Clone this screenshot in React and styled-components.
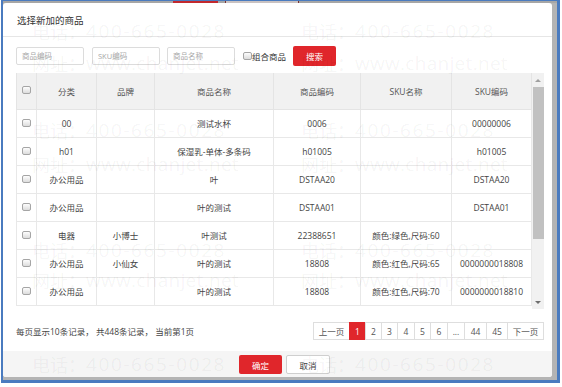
import React from 'react';
import styled, { createGlobalStyle } from 'styled-components';

const Global = createGlobalStyle`
  html, body { margin: 0; padding: 0; background: #fff; }
  body { font-family: "Open Sans", "Noto Sans CJK SC", sans-serif; }
  * { box-sizing: border-box; }
`;

const Page = styled.div`
  position: relative;
  width: 562px;
  height: 387px;
  overflow: hidden;
  background: #fff;
  padding-left: 1px;
`;

const Window = styled.div`
  width: 559px;
  height: 383px;
  border-style: solid;
  border-color: #4a7bbf;
  border-width: 1px 3px 3px 2px;
  background: #b4b4b4;
  display: flex;
  flex-direction: column;
`;

const TopStrip = styled.div`
  height: 2px;
  flex-shrink: 0;
  display: flex;
  padding-left: 170px;
  background: #a6a6a6;
`;

const StripTab = styled.div`
  width: ${p => p.w}px;
  margin-right: ${p => p.gap || 0}px;
  background: ${p => p.bg};
  border-left: ${p => (p.edge ? `1px solid ${p.edge}` : 'none')};
  border-right: ${p => (p.edge ? `1px solid ${p.edge}` : 'none')};
`;

const Modal = styled.div`
  width: 549px;
  height: 374px;
  background: #fff;
  border-radius: 3px;
  display: flex;
  flex-direction: column;
  flex-shrink: 0;
  overflow: hidden;
`;

const Title = styled.div`
  height: 34px;
  flex-shrink: 0;
  display: flex;
  align-items: center;
  padding-left: 14px;
  font-size: 9.5px;
  color: #333;
  border-bottom: 1px solid #e6e6e6;
`;

const Body = styled.div`
  padding: 9px 8px 0 13px;
  display: flex;
  flex-direction: column;
`;

const SearchRow = styled.div`
  height: 20px;
  display: flex;
  align-items: center;
`;

const Input = styled.input`
  width: 68px;
  height: 18px;
  margin-right: ${p => p.gap}px;
  border: 1px solid #dcdcdc;
  border-radius: 2px;
  padding: 0 0 0 5px;
  font-family: "Open Sans", "Noto Sans CJK SC", sans-serif;
  font-size: 7.5px;
  color: #333;
  outline: none;
  &::placeholder { color: #a8a8a8; }
`;

const Check = styled.span`
  display: inline-block;
  width: 9px;
  height: 8px;
  border: 1px solid #a5a5a5;
  border-radius: 2px;
  background: linear-gradient(#fdfdfd, #dcdcdc);
  flex-shrink: 0;
`;

const CheckLabel = styled.label`
  display: flex;
  align-items: center;
  font-size: 8.5px;
  color: #333;
  margin-right: 7px;
`;

const RedButton = styled.button`
  width: ${p => p.w}px;
  height: ${p => p.h}px;
  border: none;
  border-radius: 2px;
  background: #e0262b;
  color: #fff;
  font-family: "Open Sans", "Noto Sans CJK SC", sans-serif;
  font-size: 8.5px;
  padding: 0;
`;

const PlainButton = styled.button`
  width: 44px;
  height: 19px;
  border: 1px solid #cfcfcf;
  border-radius: 2px;
  background: #fff;
  color: #444;
  font-family: "Open Sans", "Noto Sans CJK SC", sans-serif;
  font-size: 8.5px;
  padding: 0;
`;

const TableWrap = styled.div`
  margin-top: 7px;
  height: 236px;
  display: flex;
  overflow: hidden;
`;

const Table = styled.table`
  width: 515px;
  table-layout: fixed;
  border-collapse: collapse;
  font-size: 8.5px;
  color: #444;
  align-self: flex-start;
`;

const Th = styled.th`
  height: 36px;
  background: #f1f1f1;
  font-weight: normal;
  color: #555;
  border: 1px solid #e4e4e4;
  border-top: none;
  padding: 0;
`;

const Td = styled.td`
  height: 28px;
  text-align: center;
  border: 1px solid #e8e8e8;
  padding: 0;
  white-space: nowrap;
`;

const Scrollbar = styled.div`
  width: 13px;
  height: 236px;
  background: #f1f1f1;
  display: flex;
  flex-direction: column;
  align-items: center;
`;

const Arrow = styled.div`
  height: 14px;
  flex-shrink: 0;
  display: flex;
  align-items: center;
  justify-content: center;
  &::after {
    content: '';
    border-left: 3px solid transparent;
    border-right: 3px solid transparent;
    ${p => (p.down ? 'border-top: 3px solid #6e6e6e;' : 'border-bottom: 3px solid #a0a0a0;')}
  }
`;

const Track = styled.div`
  flex: 1;
  width: 100%;
  display: flex;
  justify-content: center;
`;

const Thumb = styled.div`
  width: 11px;
  height: 152px;
  background: #c1c1c1;
`;

const InfoRow = styled.div`
  margin-top: 13px;
  height: 18px;
  display: flex;
  align-items: center;
  justify-content: space-between;
  font-size: 8.5px;
  color: #444;
`;

const Pager = styled.div`
  display: flex;
`;

const PageBtn = styled.div`
  width: ${p => p.w}px;
  height: 18px;
  display: flex;
  align-items: center;
  justify-content: center;
  font-size: 8.5px;
  color: ${p => (p.active ? '#fff' : '#555')};
  background: ${p => (p.active ? '#e0262b' : '#fff')};
  border: 1px solid ${p => (p.active ? '#e0262b' : '#dedede')};
  border-right: ${p => (p.last ? '1px solid #dedede' : 'none')};
`;

const Footer = styled.div`
  margin-top: auto;
  height: 26px;
  background: #f5f5f5;
  display: flex;
  justify-content: center;
  align-items: flex-start;
  padding: 4px 0 0 14px;
  gap: 4px;
`;

const Watermarks = styled.div`
  position: absolute;
  inset: 0;
  pointer-events: none;
`;

const WmLine = styled.div`
  position: absolute;
  display: flex;
  align-items: center;
  white-space: nowrap;
  color: rgba(0, 0, 0, 0.05);
  font-family: "Open Sans", "Noto Sans CJK SC", sans-serif;
`;

const WmPre = styled.span`
  font-size: 18px;
  font-family: "Noto Sans CJK SC", sans-serif;
`;

const WmRest = styled.span`
  font-size: 19px;
  letter-spacing: ${p => p.ls}px;
`;

const rows = [
  ['00', '', '测试水杯', '0006', '', '00000006'],
  ['h01', '', '保湿乳-单体-多条码', 'h01005', '', 'h01005'],
  ['办公用品', '', '叶', 'DSTAA20', '', 'DSTAA20'],
  ['办公用品', '', '叶的测试', 'DSTAA01', '', 'DSTAA01'],
  ['电器', '小博士', '叶测试', '22388651', '颜色:绿色,尺码:60', ''],
  ['办公用品', '小仙女', '叶的测试', '18808', '颜色:红色,尺码:65', '0000000018808'],
  ['办公用品', '', '叶的测试', '18808', '颜色:红色,尺码:70', '0000000018810'],
];

const cols = [20, 60, 58, 119, 87, 91, 80];
const heads = ['', '分类', '品牌', '商品名称', '商品编码', 'SKU名称', 'SKU编码'];

const pages = [
  ['上一页', 36], ['1', 16, true], ['2', 16], ['3', 16], ['4', 17], ['5', 16],
  ['6', 17], ['...', 17], ['44', 22], ['45', 21], ['下一页', 37],
];

const marks = [
  { y: 31, t: 'tel' }, { y: 63, t: 'web' }, { y: 130, t: 'tel' }, { y: 164, t: 'web' },
  { y: 250, t: 'tel' }, { y: 280, t: 'web' }, { y: 364, t: 'tel' }, { y: 394, t: 'web' },
];

export default function App() {
  return (
    <>
      <Global />
      <Page>
        <Window>
          <TopStrip>
            <StripTab w={45} gap={7} bg="#c2282d" />
            <StripTab w={74} bg="#c9c2c2" edge="#7a3434" />
          </TopStrip>
          <Modal>
            <Title>选择新加的商品</Title>
            <Body>
              <SearchRow>
                <Input gap={8} placeholder="商品编码" />
                <Input gap={7} placeholder="SKU编码" />
                <Input gap={8} placeholder="商品名称" />
                <CheckLabel><Check />组合商品</CheckLabel>
                <RedButton w={43} h={20}>搜索</RedButton>
              </SearchRow>
              <TableWrap>
                <Table>
                  <colgroup>
                    {cols.map((w, i) => <col key={i} style={{ width: w }} />)}
                  </colgroup>
                  <thead>
                    <tr>
                      {heads.map((h, i) => (
                        <Th key={i}>{i === 0 ? <Check /> : h}</Th>
                      ))}
                    </tr>
                  </thead>
                  <tbody>
                    {rows.map((r, ri) => (
                      <tr key={ri}>
                        <Td><Check /></Td>
                        {r.map((c, ci) => <Td key={ci}>{c}</Td>)}
                      </tr>
                    ))}
                  </tbody>
                </Table>
                <Scrollbar>
                  <Arrow />
                  <Track><Thumb /></Track>
                  <Arrow down />
                </Scrollbar>
              </TableWrap>
              <InfoRow>
                <span>每页显示10条记录， 共448条记录， 当前第1页</span>
                <Pager>
                  {pages.map(([t, w, a], i) => (
                    <PageBtn key={i} w={w} active={a} last={i === pages.length - 1}>{t}</PageBtn>
                  ))}
                </Pager>
              </InfoRow>
            </Body>
            <Footer>
              <RedButton w={43} h={19}>确定</RedButton>
              <PlainButton>取消</PlainButton>
            </Footer>
          </Modal>
        </Window>
        <Watermarks>
          {marks.map((m, i) =>
            [32, 301].map(x => (
              <WmLine key={`${i}-${x}`} style={{ left: x, top: m.y - 13 }}>
                {m.t === 'tel' ? (
                  <>
                    <WmPre>电话：</WmPre>
                    <WmRest ls={1.6}>400-665-0028</WmRest>
                  </>
                ) : (
                  <>
                    <WmPre>网址：</WmPre>
                    <WmRest ls={0.3}>www.chanjet.net</WmRest>
                  </>
                )}
              </WmLine>
            ))
          )}
        </Watermarks>
      </Page>
    </>
  );
}
